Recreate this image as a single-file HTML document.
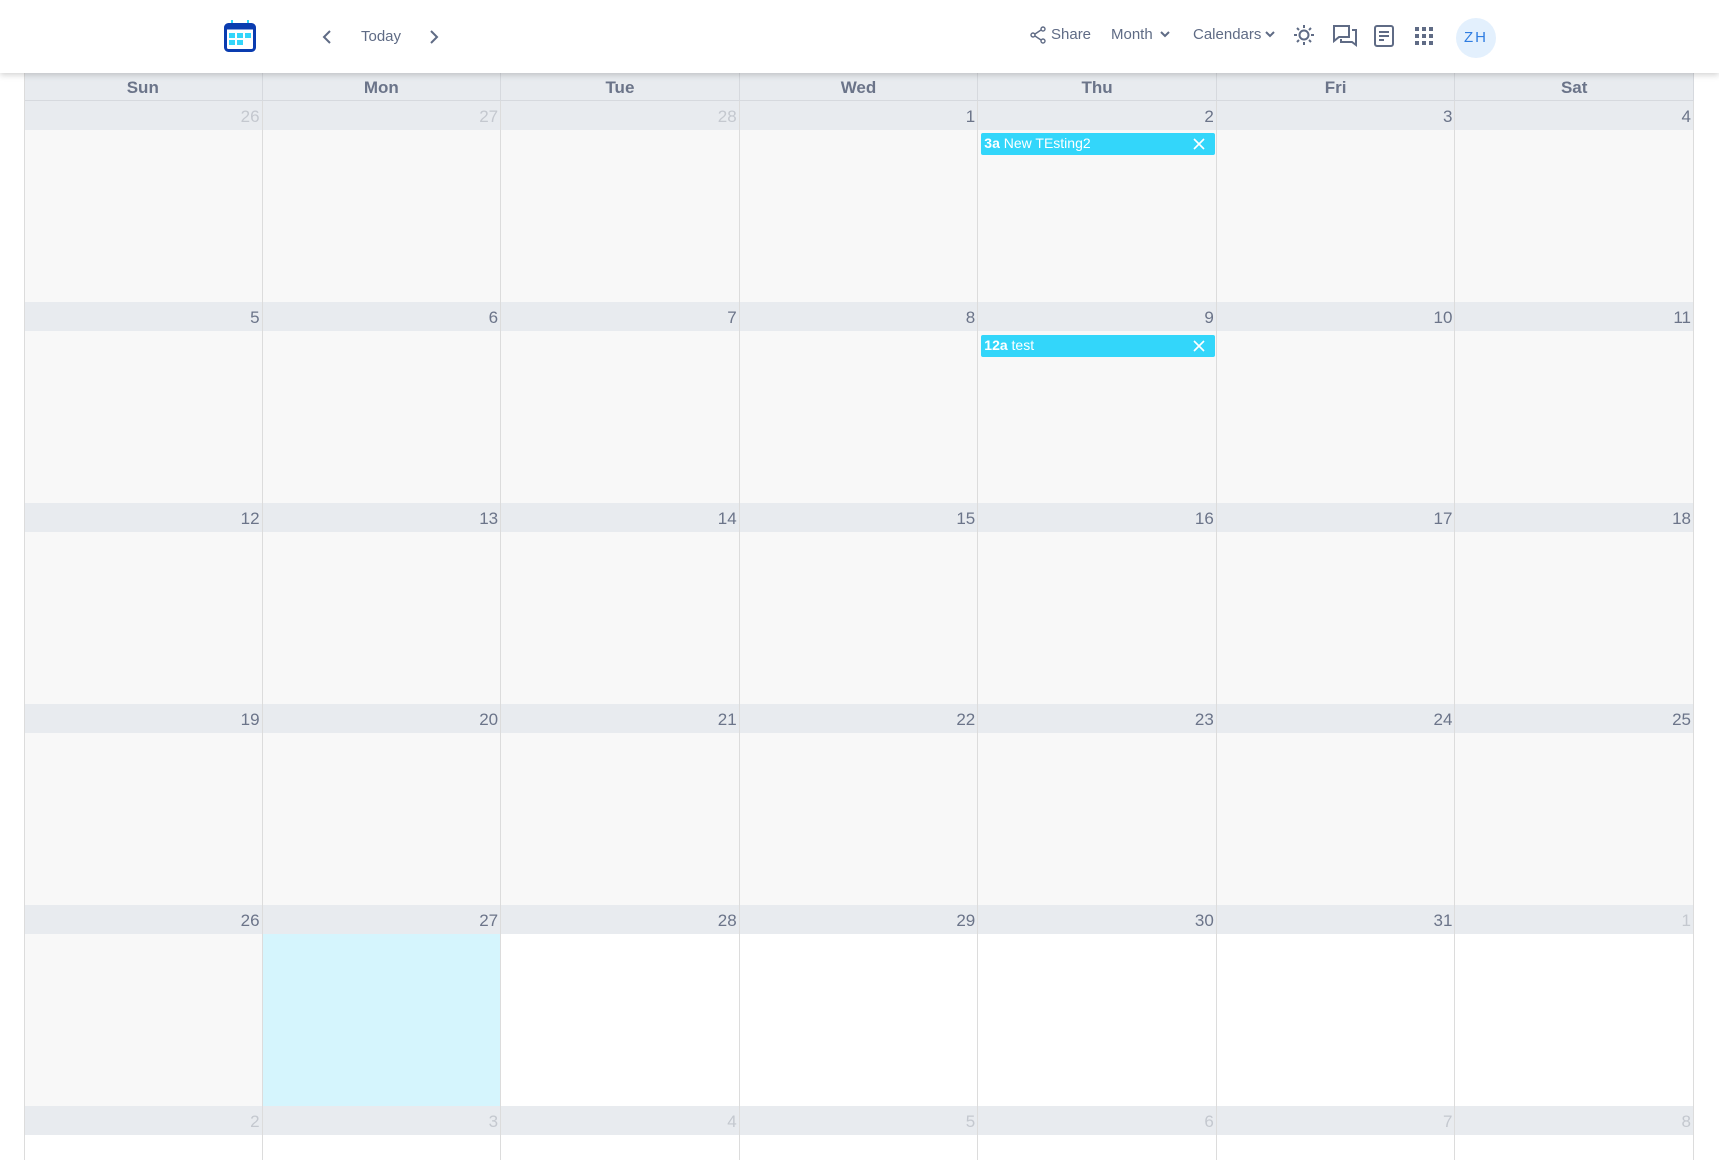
<!DOCTYPE html>
<html><head><style>
*{margin:0;padding:0;box-sizing:border-box}
html,body{width:1719px;height:1160px;overflow:hidden}
body{background:#fff;font-family:"Liberation Sans",sans-serif;position:relative}
.hdr{position:absolute;left:0;top:0;width:1719px;height:73px;background:#fff;box-shadow:0 2px 6px rgba(0,0,0,.18);z-index:5}
.t{position:absolute;color:#5f6b85;font-size:15px}
.grid{position:absolute;left:24px;top:73px;width:1670px;height:1087px;overflow:hidden}
.dh{position:absolute;top:0;height:28px;background:#e8ebef;border-right:1px solid #d6d9de;border-bottom:1px solid #d6d9de;color:#6b7489;font-weight:bold;font-size:17px;text-align:center;line-height:29px}
.cell{position:absolute;border-right:1px solid #dcdcdc;background:#f8f8f8}
.strip{position:absolute;left:0;right:0;top:0;height:29px;background:#e8ebef;text-align:right;padding-right:2px;font-size:17px;line-height:31px;color:#6b7489}
.o .strip{color:#c4c8cf}
.ev{position:absolute;height:22px;background:#33d6fa;border-radius:2px;color:#fff;font-size:14px;line-height:21px;padding-left:3px}
.ev b{font-weight:bold}
.ev svg{position:absolute;right:10px;top:5px}
</style></head><body>
<div class="hdr">
<svg style="position:absolute;left:224px;top:20px" width="32" height="32" viewBox="0 0 32 32"><rect x="7" y="0" width="2" height="5" fill="#33d6fa"/><rect x="23" y="0" width="2" height="5" fill="#33d6fa"/><rect x="1.5" y="4.5" width="29" height="26" rx="3" fill="none" stroke="#0a3cb0" stroke-width="3"/><rect x="1.5" y="4.5" width="29" height="5" fill="#0a3cb0"/><rect x="5" y="13" width="6" height="5" fill="#33d6fa"/><rect x="13" y="13" width="6" height="5" fill="#33d6fa"/><rect x="21" y="13" width="6" height="5" fill="#33d6fa"/><rect x="5" y="20" width="6" height="5" fill="#33d6fa"/><rect x="13" y="20" width="6" height="5" fill="#33d6fa"/></svg>
<svg style="position:absolute;left:321px;top:29px" width="12" height="16" viewBox="0 0 12 16"><path d="M9 2 L3 8 L9 14" fill="none" stroke="#5f6b85" stroke-width="2"/></svg>
<div class="t" style="left:361px;top:28px">Today</div>
<svg style="position:absolute;left:428px;top:29px" width="12" height="16" viewBox="0 0 12 16"><path d="M3 2 L9 8 L3 14" fill="none" stroke="#5f6b85" stroke-width="2"/></svg>
<svg style="position:absolute;left:1030px;top:26px" width="16" height="18" viewBox="0 0 16 18"><circle cx="13" cy="3" r="2" fill="none" stroke="#5f6b85" stroke-width="1.4"/><circle cx="3" cy="9" r="2" fill="none" stroke="#5f6b85" stroke-width="1.4"/><circle cx="13" cy="15" r="2" fill="none" stroke="#5f6b85" stroke-width="1.4"/><path d="M11 4 L5 8 M5 10 L11 14" stroke="#5f6b85" stroke-width="1.4"/></svg>
<div class="t" style="left:1051px;top:26px">Share</div>
<div class="t" style="left:1111px;top:26px">Month</div>
<svg style="position:absolute;left:1160px;top:30px" width="10" height="8" viewBox="0 0 10 8"><path d="M1 2 L5 6 L9 2" fill="none" stroke="#5f6b85" stroke-width="2"/></svg>
<div class="t" style="left:1193px;top:26px">Calendars</div>
<svg style="position:absolute;left:1265px;top:30px" width="10" height="8" viewBox="0 0 10 8"><path d="M1 2 L5 6 L9 2" fill="none" stroke="#5f6b85" stroke-width="2"/></svg>
<svg style="position:absolute;left:1293px;top:24px" width="22" height="22" viewBox="0 0 22 22"><circle cx="11" cy="11" r="4.5" fill="none" stroke="#5f6b85" stroke-width="2"/><path d="M11 1v3M11 18v3M1 11h3M18 11h3M4 4l2 2M16 16l2 2M4 18l2-2M16 6l2-2" stroke="#5f6b85" stroke-width="2"/></svg>
<svg style="position:absolute;left:1333px;top:25px" width="24" height="22" viewBox="0 0 24 22"><path d="M1 1h15v11H6l-5 4z" fill="none" stroke="#5f6b85" stroke-width="2"/><path d="M19 5h4v15l-4-3H8v-3" fill="none" stroke="#5f6b85" stroke-width="2"/></svg>
<svg style="position:absolute;left:1374px;top:25px" width="20" height="22" viewBox="0 0 20 22"><rect x="1" y="1" width="18" height="20" rx="2" fill="none" stroke="#5f6b85" stroke-width="2"/><path d="M5 7h10M5 11h10M5 15h5" stroke="#5f6b85" stroke-width="2"/></svg>
<svg style="position:absolute;left:1415px;top:27px" width="18" height="18" viewBox="0 0 18 18" fill="#5f6b85"><rect x="0" y="0" width="4" height="4"/><rect x="7" y="0" width="4" height="4"/><rect x="14" y="0" width="4" height="4"/><rect x="0" y="7" width="4" height="4"/><rect x="7" y="7" width="4" height="4"/><rect x="14" y="7" width="4" height="4"/><rect x="0" y="14" width="4" height="4"/><rect x="7" y="14" width="4" height="4"/><rect x="14" y="14" width="4" height="4"/></svg>
<div style="position:absolute;left:1456px;top:18px;width:40px;height:40px;border-radius:50%;background:#e3f0fd;color:#2f7de1;font-size:15px;text-align:center;line-height:40px;letter-spacing:2px">ZH</div>
</div>
<div class="grid" id="g"></div>
<script>
var g=document.getElementById('g'),h='';
var days=['Sun','Mon','Tue','Wed','Thu','Fri','Sat'];
var W=1670/7;
for(var i=0;i<7;i++)h+='<div class="dh" style="left:'+(i*W)+'px;width:'+W+'px">'+days[i]+'</div>';
var nums=[[26,27,28,1,2,3,4],[5,6,7,8,9,10,11],[12,13,14,15,16,17,18],[19,20,21,22,23,24,25],[26,27,28,29,30,31,1],[2,3,4,5,6,7,8]];
for(var r=0;r<6;r++)for(var c=0;c<7;c++){
 var o=(r==0&&c<3)||(r==4&&c==6)||r==5;
 var bg='#f8f8f8';
 if(r==4&&c==1)bg='#d5f5fd';else if((r==4&&c>1)||r==5)bg='#fff';
 h+='<div class="cell'+(o?' o':'')+'" style="left:'+(c*W)+'px;width:'+W+'px;top:'+(28+r*201)+'px;height:201px;background:'+bg+'"><div class="strip">'+nums[r][c]+'</div></div>';
}
var x='<svg width="12" height="12" viewBox="0 0 12 12"><path d="M1 1L11 11M11 1L1 11" stroke="#fff" stroke-width="1.6"/></svg>';
h+='<div class="ev" style="left:'+(4*W+3)+'px;top:60px;width:'+(W-5)+'px"><b>3a</b> New TEsting2'+x+'</div>';
h+='<div class="ev" style="left:'+(4*W+3)+'px;top:262px;width:'+(W-5)+'px"><b>12a</b> test'+x+'</div>';
g.innerHTML=h;
</script>
<div style="position:absolute;left:24px;top:73px;width:1px;height:1087px;background:#dcdcdc"></div>
</body></html>
